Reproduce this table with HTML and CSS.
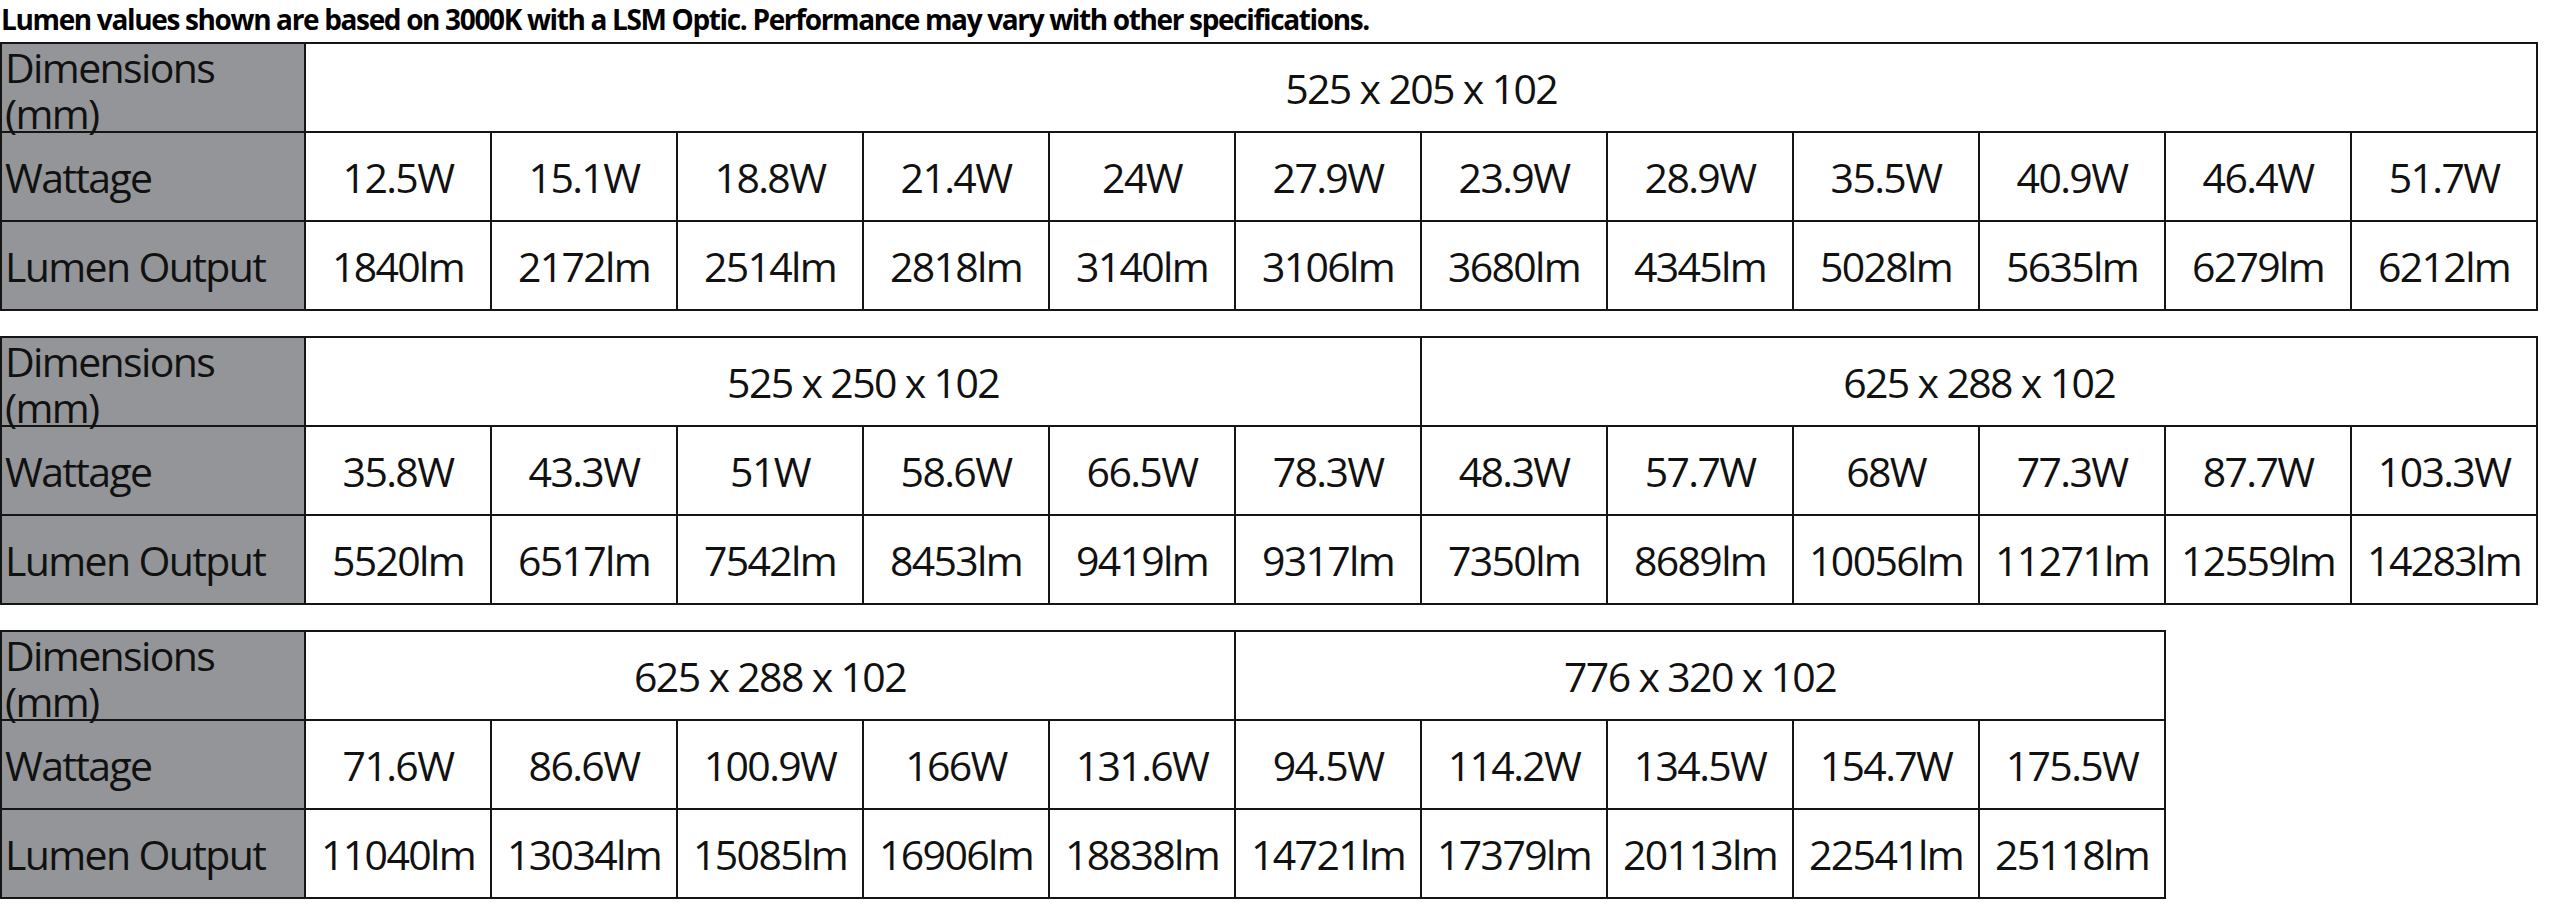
FILE: index.html
```html
<!DOCTYPE html>
<html lang="en">
<head>
<meta charset="utf-8">
<title>Lumen Output Table</title>
<link rel="stylesheet" href="styles.css">
</head>
<body>
<p class="note">Lumen values shown are based on 3000K with a LSM Optic. Performance may vary with other specifications.</p>

<table class="spec spec-12">
  <colgroup><col class="label-col"><col class="data-col" span="12"></colgroup>
  <tr>
    <th class="label dim"><div class="dim-text">Dimensions (mm)</div></th>
    <td colspan="12">525 x 205 x 102</td>
  </tr>
  <tr>
    <th class="label">Wattage</th>
    <td>12.5W</td><td>15.1W</td><td>18.8W</td><td>21.4W</td><td>24W</td><td>27.9W</td><td>23.9W</td><td>28.9W</td><td>35.5W</td><td>40.9W</td><td>46.4W</td><td>51.7W</td>
  </tr>
  <tr>
    <th class="label">Lumen Output</th>
    <td>1840lm</td><td>2172lm</td><td>2514lm</td><td>2818lm</td><td>3140lm</td><td>3106lm</td><td>3680lm</td><td>4345lm</td><td>5028lm</td><td>5635lm</td><td>6279lm</td><td>6212lm</td>
  </tr>
</table>

<table class="spec spec-12">
  <colgroup><col class="label-col"><col class="data-col" span="12"></colgroup>
  <tr>
    <th class="label dim"><div class="dim-text">Dimensions (mm)</div></th>
    <td colspan="6">525 x 250 x 102</td>
    <td colspan="6">625 x 288 x 102</td>
  </tr>
  <tr>
    <th class="label">Wattage</th>
    <td>35.8W</td><td>43.3W</td><td>51W</td><td>58.6W</td><td>66.5W</td><td>78.3W</td><td>48.3W</td><td>57.7W</td><td>68W</td><td>77.3W</td><td>87.7W</td><td>103.3W</td>
  </tr>
  <tr>
    <th class="label">Lumen Output</th>
    <td>5520lm</td><td>6517lm</td><td>7542lm</td><td>8453lm</td><td>9419lm</td><td>9317lm</td><td>7350lm</td><td>8689lm</td><td>10056lm</td><td>11271lm</td><td>12559lm</td><td>14283lm</td>
  </tr>
</table>

<table class="spec spec-10">
  <colgroup><col class="label-col"><col class="data-col" span="10"></colgroup>
  <tr>
    <th class="label dim"><div class="dim-text">Dimensions (mm)</div></th>
    <td colspan="5">625 x 288 x 102</td>
    <td colspan="5">776 x 320 x 102</td>
  </tr>
  <tr>
    <th class="label">Wattage</th>
    <td>71.6W</td><td>86.6W</td><td>100.9W</td><td>166W</td><td>131.6W</td><td>94.5W</td><td>114.2W</td><td>134.5W</td><td>154.7W</td><td>175.5W</td>
  </tr>
  <tr>
    <th class="label">Lumen Output</th>
    <td>11040lm</td><td>13034lm</td><td>15085lm</td><td>16906lm</td><td>18838lm</td><td>14721lm</td><td>17379lm</td><td>20113lm</td><td>22541lm</td><td>25118lm</td>
  </tr>
</table>
</body>
</html>
```

FILE: styles.css
```css
html, body {
  margin: 0;
  padding: 0;
  background: #ffffff;
}

body {
  font-family: "Open Sans", "Noto Sans", sans-serif;
  color: #111111;
}

.note {
  margin: 0 0 0 1px;
  height: 42px;
  line-height: 38px;
  font-size: 28px;
  font-weight: 700;
  letter-spacing: -1.35px;
  color: #000000;
  white-space: nowrap;
}

.spec {
  border-collapse: collapse;
  table-layout: fixed;
  margin: 0 0 25px 0;
}

.spec-12 { width: 2536px; }
.spec-10 { width: 2164px; }

.label-col { width: 304px; }
.data-col { width: 186px; }

.spec th,
.spec td {
  border: 2px solid #151515;
  height: 87px;
  padding: 0;
  font-size: 41px;
  font-weight: 400;
  letter-spacing: -0.04em;
  white-space: nowrap;
  vertical-align: middle;
}

.spec td {
  text-align: center;
  background: #ffffff;
}

.spec th.label {
  background: #939598;
  text-align: left;
  padding-left: 3px;
}

.spec th.dim {
  vertical-align: top;
}

.dim-text {
  white-space: normal;
  width: 240px;
  height: 87px;
  line-height: 46px;
}
```
